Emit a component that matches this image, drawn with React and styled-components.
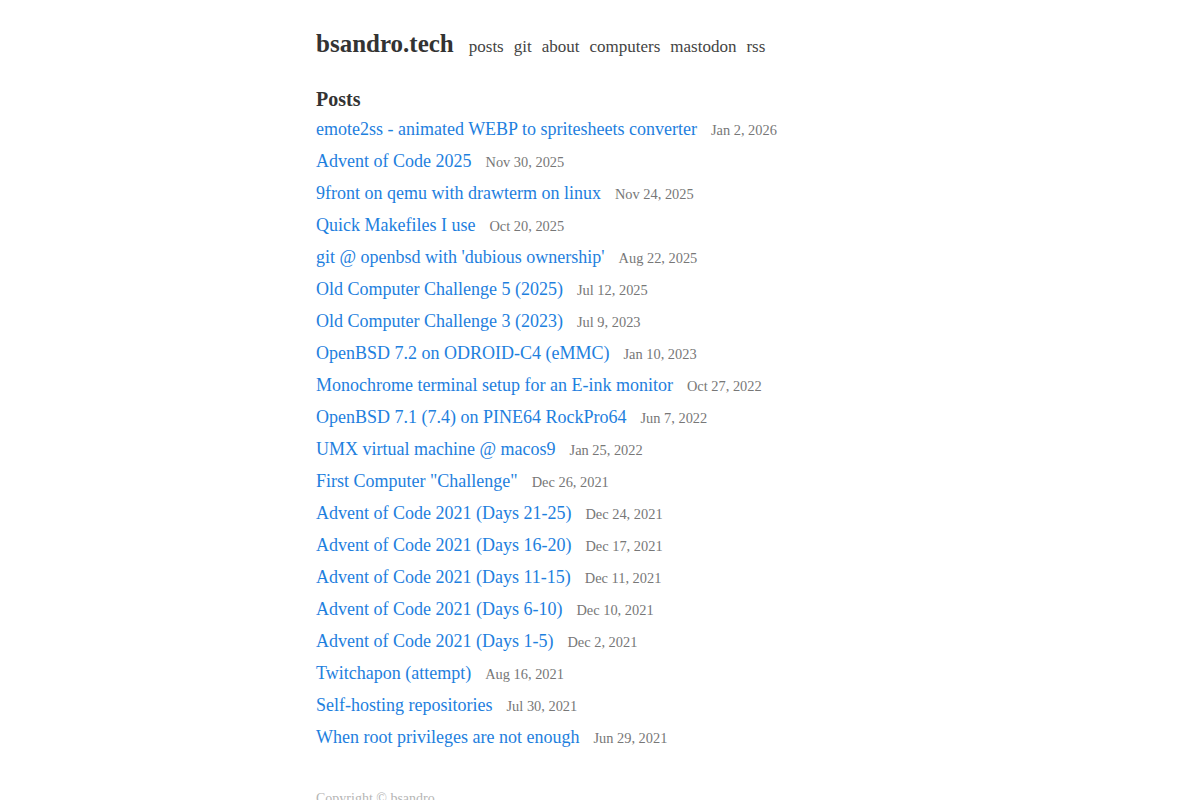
import styled, { createGlobalStyle } from "styled-components";

const posts = [
	["emote2ss - animated WEBP to spritesheets converter", "Jan 2, 2026"],
	["Advent of Code 2025", "Nov 30, 2025"],
	["9front on qemu with drawterm on linux", "Nov 24, 2025"],
	["Quick Makefiles I use", "Oct 20, 2025"],
	["git @ openbsd with 'dubious ownership'", "Aug 22, 2025"],
	["Old Computer Challenge 5 (2025)", "Jul 12, 2025"],
	["Old Computer Challenge 3 (2023)", "Jul 9, 2023"],
	["OpenBSD 7.2 on ODROID-C4 (eMMC)", "Jan 10, 2023"],
	["Monochrome terminal setup for an E-ink monitor", "Oct 27, 2022"],
	["OpenBSD 7.1 (7.4) on PINE64 RockPro64", "Jun 7, 2022"],
	["UMX virtual machine @ macos9", "Jan 25, 2022"],
	['First Computer "Challenge"', "Dec 26, 2021"],
	["Advent of Code 2021 (Days 21-25)", "Dec 24, 2021"],
	["Advent of Code 2021 (Days 16-20)", "Dec 17, 2021"],
	["Advent of Code 2021 (Days 11-15)", "Dec 11, 2021"],
	["Advent of Code 2021 (Days 6-10)", "Dec 10, 2021"],
	["Advent of Code 2021 (Days 1-5)", "Dec 2, 2021"],
	["Twitchapon (attempt)", "Aug 16, 2021"],
	["Self-hosting repositories", "Jul 30, 2021"],
	["When root privileges are not enough", "Jun 29, 2021"],
];

const nav = ["posts", "git", "about", "computers", "mastodon", "rss"];

export default function App() {
	return (
		<>
			<GlobalStyle />
			<Page>
				<Header>
					<Brand href="#">bsandro.tech</Brand>
					<Nav>
						{nav.map(n => (
							<NavLink key={n} href="#">
								{n}
							</NavLink>
						))}
					</Nav>
				</Header>
				<Main>
					<Heading>Posts</Heading>
					<List>
						{posts.map(([title, date]) => (
							<Item key={title}>
								<PostLink href="#">{title}</PostLink>
								<PostDate>{date}</PostDate>
							</Item>
						))}
					</List>
				</Main>
				<Footer>Copyright © bsandro</Footer>
			</Page>
		</>
	);
}

const GlobalStyle = createGlobalStyle`
	body {
		margin: 0;
		background: #fff;
		font-family: "Liberation Serif", "Times New Roman", serif;
		color: #333;
	}
`;

const Page = styled.div`
	max-width: 568px;
	margin: 0 auto;
	padding-top: 30px;
`;

const Header = styled.header`
	display: flex;
	align-items: baseline;
	gap: 15px;
`;

const Brand = styled.a`
	font-size: 25px;
	font-weight: bold;
	color: #333;
	text-decoration: none;
`;

const Nav = styled.nav`
	display: flex;
	gap: 10px;
`;

const NavLink = styled.a`
	font-size: 17px;
	color: #444;
	text-decoration: none;
`;

const Main = styled.main`
	margin-top: 30px;
`;

const Heading = styled.h2`
	font-size: 20px;
	font-weight: bold;
	margin: 0 0 4px;
	color: #333;
`;

const List = styled.ul`
	list-style: none;
	margin: 0;
	padding: 0;
`;

const Item = styled.li`
	display: flex;
	align-items: baseline;
	gap: 14px;
	height: 32px;
	line-height: 28px;
`;

const PostLink = styled.a`
	font-size: 18px;
	color: #1e80de;
	text-decoration: none;
`;

const PostDate = styled.span`
	font-size: 14.4px;
	color: #777;
`;

const Footer = styled.footer`
	margin-top: 36px;
	font-size: 14px;
	color: #b5b5b5;
`;
